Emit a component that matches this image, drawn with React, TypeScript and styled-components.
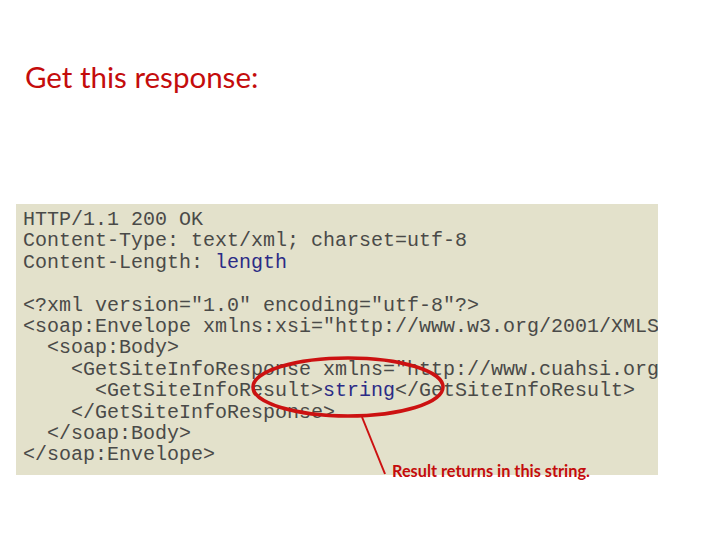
import styled, { createGlobalStyle } from "styled-components";

const GlobalStyle = createGlobalStyle`
  html, body {
    margin: 0;
    padding: 0;
    background: #fff;
  }
`;

const Slide = styled.div`
  width: 720px;
  height: 540px;
  box-sizing: border-box;
  padding: 60px 0 0 16px;
  display: flex;
  flex-direction: column;
  background: #fff;
  overflow: hidden;
`;

const Title = styled.h1`
  margin: 0 0 0 9px;
  font-family: Lato, "Open Sans", sans-serif;
  font-weight: 400;
  font-size: 29.5px;
  line-height: 34px;
  color: #c40c0c;
`;

const Figure = styled.div`
  position: relative;
  margin-top: 110px;
  width: 642px;
`;

const CodePanel = styled.pre`
  margin: 0;
  height: 271px;
  box-sizing: border-box;
  padding: 5px 0 0 7px;
  background: #e3e1cb;
  overflow: hidden;
  white-space: pre;
  font-family: "Liberation Mono", "Courier New", monospace;
  font-size: 20px;
  line-height: 21.4px;
  color: #4a4a48;
`;

const Value = styled.span`
  color: #2b2b86;
`;

const Overlay = styled.svg`
  position: absolute;
  left: 0;
  top: 0;
  pointer-events: none;
`;

const Callout = styled.div`
  position: absolute;
  left: 376px;
  top: 257px;
  font-family: Lato, "Open Sans", sans-serif;
  font-weight: 700;
  font-size: 16.3px;
  color: #c40c0c;
  white-space: nowrap;
`;

export default function App() {
  return (
    <>
      <GlobalStyle />
      <Slide>
        <Title>Get this response:</Title>
        <Figure>
          <CodePanel>
            {"HTTP/1.1 200 OK\n"}
            {"Content-Type: text/xml; charset=utf-8\n"}
            {"Content-Length: "}
            <Value>length</Value>
            {"\n\n"}
            {'<?xml version="1.0" encoding="utf-8"?>\n'}
            {'<soap:Envelope xmlns:xsi="http://www.w3.org/2001/XMLSchema-instance">\n'}
            {"  <soap:Body>\n"}
            {'    <GetSiteInfoResponse xmlns="http://www.cuahsi.org/his/1.0/ws/">\n'}
            {"      <GetSiteInfoResult>"}
            <Value>string</Value>
            {"</GetSiteInfoResult>\n"}
            {"    </GetSiteInfoResponse>\n"}
            {"  </soap:Body>\n"}
            {"</soap:Envelope>"}
          </CodePanel>
          <Overlay width="642" height="290" viewBox="0 0 642 290">
            <ellipse
              cx="332"
              cy="183"
              rx="95"
              ry="29"
              fill="none"
              stroke="#cc1111"
              strokeWidth="3.5"
            />
            <line x1="346" y1="213" x2="369" y2="270" stroke="#cc1111" strokeWidth="2" />
          </Overlay>
          <Callout>Result returns in this string.</Callout>
        </Figure>
      </Slide>
    </>
  );
}
